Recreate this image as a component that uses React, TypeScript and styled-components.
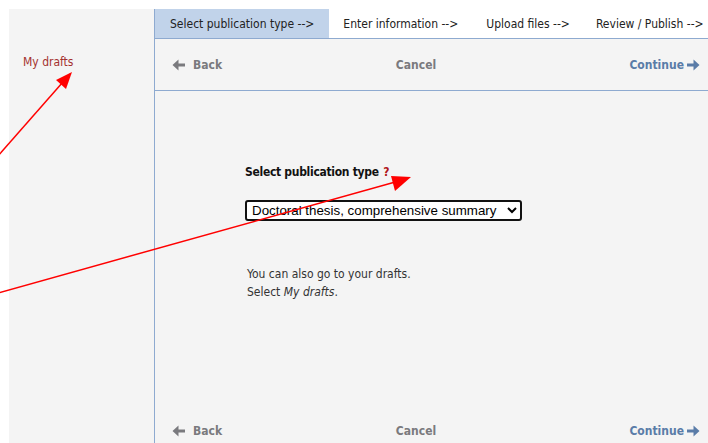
import React, { useState } from "react";
import styled, { createGlobalStyle } from "styled-components";

const GlobalStyle = createGlobalStyle`
  html, body {
    margin: 0;
    padding: 0;
    background: #fff;
    overflow: hidden;
  }
  body {
    font-family: "DejaVu Sans Condensed", "DejaVu Sans", Verdana, sans-serif;
  }
`;

const steps = [
  "Select publication type -->",
  "Enter information -->",
  "Upload files -->",
  "Review / Publish -->",
];

const App = () => {
  const [type, setType] = useState("doc-summary");

  return (
    <>
      <GlobalStyle />
      <Page>
        <Sidebar>
          <DraftsLink href="#">My drafts</DraftsLink>
        </Sidebar>
        <Main>
          <Steps>
            {steps.map((s, i) => (
              <Step key={s} active={i === 0}>
                {s}
              </Step>
            ))}
          </Steps>
          <Toolbar bordered>
            <NavButton>
              <ArrowIcon dir="left" /> Back
            </NavButton>
            <CancelButton>Cancel</CancelButton>
            <NavButton primary>
              Continue <ArrowIcon dir="right" />
            </NavButton>
          </Toolbar>
          <Content>
            <Heading>
              Select publication type <Help>?</Help>
            </Heading>
            <TypeSelect value={type} onChange={(e) => setType(e.target.value)}>
              <option value="doc-summary">Doctoral thesis, comprehensive summary</option>
              <option value="doc-mono">Doctoral thesis, monograph</option>
              <option value="article">Article in journal</option>
            </TypeSelect>
            <Hint>
              You can also go to your drafts.
              <br />
              Select <em>My drafts</em>.
            </Hint>
          </Content>
          <Toolbar>
            <NavButton>
              <ArrowIcon dir="left" /> Back
            </NavButton>
            <CancelButton>Cancel</CancelButton>
            <NavButton primary>
              Continue <ArrowIcon dir="right" />
            </NavButton>
          </Toolbar>
        </Main>
        <Annotations width="708" height="443" viewBox="0 0 708 443">
          <line x1="-2" y1="156" x2="70" y2="74" stroke="#f00" strokeWidth="1.5" />
          <path d="M72 72 L66 89 L56 80 Z" fill="#f00" />
          <line x1="-2" y1="293" x2="406" y2="179" stroke="#f00" strokeWidth="1.5" />
          <path d="M411 177 L395 191 L391 176 Z" fill="#f00" />
        </Annotations>
      </Page>
    </>
  );
};

const ArrowIcon = ({ dir }: { dir: "left" | "right" }) => (
  <svg width="13" height="12" viewBox="0 0 13 12" style={{ transform: dir === "left" ? "scaleX(-1)" : undefined }}>
    <path d="M0 4.5 H6.5 V0.5 L12.5 6 L6.5 11.5 V7.5 H0 Z" fill="currentColor" />
  </svg>
);

const Page = styled.div`
  position: relative;
  display: flex;
  padding: 9px 0 0 9px;
`;

const Sidebar = styled.aside`
  width: 145px;
  flex-shrink: 0;
  background: #f4f4f4;
  padding: 42px 0 0 14px;
  box-sizing: border-box;
`;

const DraftsLink = styled.a`
  color: #a4322f;
  font-size: 12px;
  text-decoration: none;
`;

const Main = styled.main`
  flex: 1;
  display: flex;
  flex-direction: column;
  border-left: 1px solid #8eaad0;
  background: #f4f4f4;
  min-width: 0;
`;

const Steps = styled.nav`
  display: flex;
  height: 29px;
  background: #fff;
  border-bottom: 1px solid #8eaad0;
  white-space: nowrap;
`;

const Step = styled.div<{ active?: boolean }>`
  display: flex;
  align-items: center;
  padding: 0 14px;
  font-size: 12px;
  color: #222;
  background: ${(p) => (p.active ? "#c1d3ea" : "transparent")};
  &:first-child {
    padding: 0 15px 0 15px;
  }
  &:last-child {
    padding-left: 12px;
  }
`;

const Toolbar = styled.div<{ bordered?: boolean }>`
  display: grid;
  grid-template-columns: 1fr auto 1fr;
  align-items: center;
  height: 51px;
  padding: 0 8px 0 17px;
  border-bottom: ${(p) => (p.bordered ? "1px solid #8eaad0" : "none")};
  flex-shrink: 0;
`;

const NavButton = styled.span<{ primary?: boolean }>`
  display: flex;
  align-items: center;
  gap: ${(p) => (p.primary ? "3px" : "8px")};
  font-size: 12px;
  font-weight: bold;
  color: ${(p) => (p.primary ? "#5a7ca8" : "#7a7a7e")};
  justify-self: ${(p) => (p.primary ? "end" : "start")};
  cursor: pointer;
`;

const CancelButton = styled.span`
  font-size: 12px;
  font-weight: bold;
  color: #7a7a7e;
  margin-right: 40px;
  cursor: pointer;
`;

const Content = styled.section`
  height: 314px;
  box-sizing: border-box;
  padding: 74px 0 0 90px;
`;

const Heading = styled.h2`
  margin: 0;
  font-size: 12px;
  font-weight: bold;
  letter-spacing: -0.3px;
  color: #111;
`;

const Help = styled.span`
  color: #b0141a;
  margin-left: 1px;
`;

const TypeSelect = styled.select`
  display: block;
  margin-top: 21px;
  width: 277px;
  height: 21px;
  font-family: "Liberation Sans", Arial, sans-serif;
  font-size: 13.33px;
  color: #000;
  background: #fff;
  border: 2px solid #111;
  border-radius: 3px;
  padding: 0 0 0 1px;
`;

const Hint = styled.p`
  margin: 44px 0 0 2px;
  font-size: 12px;
  line-height: 18px;
  color: #333;
`;

const Annotations = styled.svg`
  position: absolute;
  left: 0;
  top: 0;
  pointer-events: none;
`;

export default App;
